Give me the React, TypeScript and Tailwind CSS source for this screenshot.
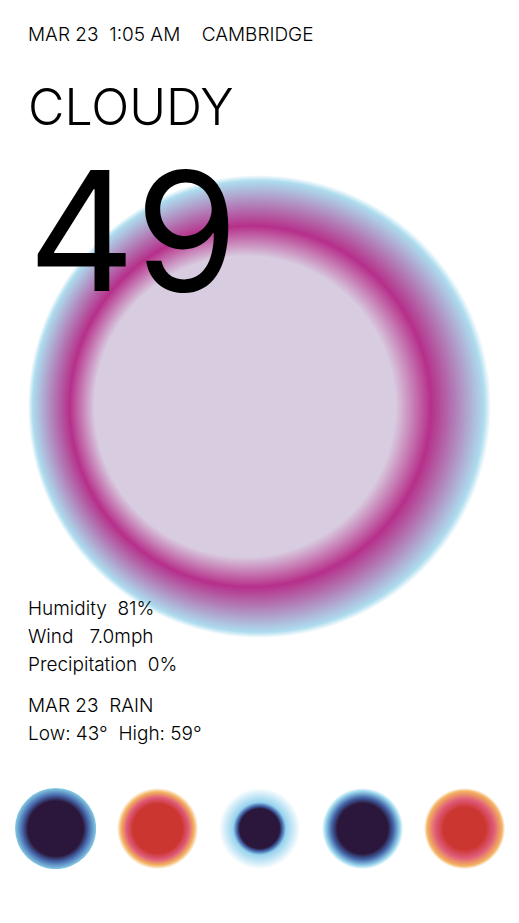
type Stop = { offset: number; color: string };

type OrbProps = {
  id: string;
  stops: Stop[];
  focus?: number;
  className?: string;
};

function Orb({ id, stops, focus = 50, className }: OrbProps) {
  return (
    <svg viewBox="0 0 100 100" className={className} aria-hidden="true">
      <defs>
        <radialGradient id={id} cx="50" cy="50" r="50" fx={focus} fy="50" gradientUnits="userSpaceOnUse">
          {stops.map((s) => (
            <stop key={s.offset} offset={s.offset} stopColor={s.color} />
          ))}
        </radialGradient>
      </defs>
      <circle cx="50" cy="50" r="50" fill={`url(#${id})`} />
    </svg>
  );
}

const today: Stop[] = [
  { offset: 0.65, color: "#d8cce0" },
  { offset: 0.78, color: "#b62f8a" },
  { offset: 0.975, color: "#addcee" },
  { offset: 1, color: "#ffffff" },
];

const days: { name: string; stops: Stop[] }[] = [
  {
    name: "Rain",
    stops: [
      { offset: 0.68, color: "#2b173b" },
      { offset: 0.82, color: "#4668ac" },
      { offset: 1, color: "#86cde6" },
    ],
  },
  {
    name: "Sunny",
    stops: [
      { offset: 0.61, color: "#cb3631" },
      { offset: 0.76, color: "#df5a78" },
      { offset: 0.9, color: "#f3b260" },
      { offset: 1, color: "#ffffff" },
    ],
  },
  {
    name: "Showers",
    stops: [
      { offset: 0.49, color: "#2b173b" },
      { offset: 0.56, color: "#4264a8" },
      { offset: 0.65, color: "#97d3ee" },
      { offset: 1, color: "#ffffff" },
    ],
  },
  {
    name: "Storm",
    stops: [
      { offset: 0.62, color: "#2b173b" },
      { offset: 0.76, color: "#4264a8" },
      { offset: 0.92, color: "#9bd8ee" },
      { offset: 1, color: "#ffffff" },
    ],
  },
  {
    name: "Hot",
    stops: [
      { offset: 0.52, color: "#cb3631" },
      { offset: 0.72, color: "#df5a78" },
      { offset: 0.92, color: "#f3b260" },
      { offset: 1, color: "#ffffff" },
    ],
  },
];

export default function App() {
  return (
    <main className="relative min-h-screen overflow-hidden bg-white font-['Inter',sans-serif] font-light text-black">
      <div className="absolute inset-x-7 top-[175px]">
        <Orb id="today" stops={today} focus={41} className="block w-full" />
      </div>

      <div className="relative px-7 pt-[21px] text-[19px] leading-7 whitespace-pre">
        <header>
          <p>{"MAR 23  1:05 AM    CAMBRIDGE"}</p>
          <h1 className="mt-7 text-[50px] leading-[60px]">CLOUDY</h1>
        </header>
        <p className="mt-3.5 text-[166px] leading-[160px] font-normal">49</p>

        <section className="mt-[284px]">
          <p>{"Humidity  81%"}</p>
          <p>{"Wind   7.0mph"}</p>
          <p>{"Precipitation  0%"}</p>
        </section>
        <section className="mt-[13px]">
          <p>{"MAR 23  RAIN"}</p>
          <p>{"Low: 43°  High: 59°"}</p>
        </section>
      </div>

      <nav className="relative mt-10 grid grid-cols-5 gap-[21px] pr-3.5 pl-[15px]">
        {days.map((day) => (
          <button key={day.name} type="button" aria-label={day.name} className="cursor-pointer rounded-full">
            <Orb id={day.name} stops={day.stops} className="block w-full" />
          </button>
        ))}
      </nav>
    </main>
  );
}
